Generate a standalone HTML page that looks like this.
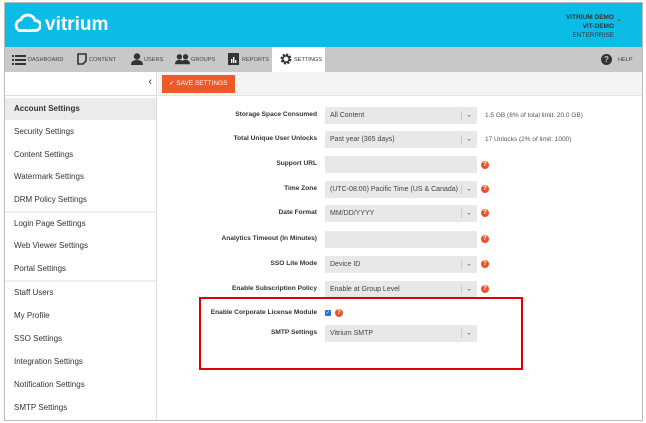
<!DOCTYPE html>
<html><head><style>
*{box-sizing:border-box;margin:0;padding:0}
body{width:646px;height:423px;background:#fff;font-family:"Liberation Sans",sans-serif;position:relative;overflow:hidden}
.frame{position:absolute;left:4px;top:2px;width:639px;height:419px;border:1px solid #bbb;background:#fff}
.hdr{position:absolute;left:5px;top:3px;width:637px;height:44px;background:#0bbde6}
.logo{position:absolute;top:11px;color:#fff;font-size:19px;font-weight:bold}
.acct{position:absolute;right:28px;top:10px;text-align:right;font-size:6.5px;line-height:9px;color:#333;font-weight:bold}
.nav{position:absolute;left:5px;top:47px;width:637px;height:25px;background:#c8c8c8;font-size:5.6px;color:#444}
.nav span{position:absolute;top:9.5px}
.tab{position:absolute;left:267px;top:0;width:53px;height:25px;background:#fff}
.side{position:absolute;left:5px;top:72px;width:152px;height:348px;border-right:1px solid #ddd;background:#fff}
.side .top{height:24px;border-bottom:1px solid #ddd;position:relative}
.item{position:absolute;left:0;width:151px;height:22px;font-size:8px;color:#333;padding-left:9px;line-height:22px}
.toolbar{position:absolute;left:158px;top:72px;width:484px;height:24px;background:#f4f4f4;border-bottom:1px solid #e4e4e4}
.save{position:absolute;left:162px;top:75px;width:73px;height:18px;background:#ec5a2a;color:#fff;font-size:6.5px;line-height:18px;padding-left:7px}
.lbl{position:absolute;right:329px;font-size:6.6px;font-weight:bold;color:#333;text-align:right}
.inp{position:absolute;left:325px;width:152px;height:17px;background:#e8e8e8;font-size:7px;color:#444;padding-left:5px;line-height:17px}
.inp.s:after{content:"";position:absolute;right:15px;top:4px;height:9px;border-left:1px solid #ccc}
.inp.s:before{content:"";position:absolute;right:6px;top:8px;border:2.5px solid transparent;border-top:2.5px solid #999}
.q{position:absolute;left:481px;width:8px;height:8px;border-radius:50%;background:#e8552a;color:#fff;font-size:6px;font-weight:bold;text-align:center;line-height:8px}
.note{position:absolute;left:485px;font-size:6.5px;color:#555}
.red{position:absolute;left:199px;top:297px;width:324px;height:73px;border:2px solid #e00000}
</style></head><body>
<div class="frame"></div>
<div class="hdr">
<svg style="position:absolute;left:9px;top:10px" width="27" height="20" viewBox="0 0 32 24"><path d="M6 21 A7 7 0 0 1 8 8 A9 9 0 0 1 25 9 A6 6 0 0 1 26 21 Z" fill="none" stroke="#fff" stroke-width="3.5"/><path d="M13 14 L20 14 L16 21 Z" fill="#0bbde6"/></svg>
<div class="logo" style="left:40px">vitrium</div>
<div class="acct">VITRIUM DEMO<br>VIT-DEMO<br><span style="font-weight:normal">ENTERPRISE</span></div>
<div style="position:absolute;right:20px;top:12px;font-size:7px;color:#333">⌄</div>
</div>
<div class="nav">
<div class="tab"></div>
<svg style="position:absolute;left:7px;top:7px" width="14" height="11"><rect x="0" y="1" width="2" height="2" fill="#333"/><rect x="3" y="1" width="11" height="2" fill="#333"/><rect x="0" y="5" width="2" height="2" fill="#333"/><rect x="3" y="5" width="11" height="2" fill="#333"/><rect x="0" y="9" width="2" height="2" fill="#333"/><rect x="3" y="9" width="11" height="2" fill="#333"/></svg>
<span style="left:23px">DASHBOARD</span>
<svg style="position:absolute;left:72px;top:6px" width="10" height="12"><path d="M1 1H9V8L6 11H1Z" fill="none" stroke="#333" stroke-width="1.6"/></svg>
<span style="left:84px">CONTENT</span>
<svg style="position:absolute;left:126px;top:6px" width="12" height="12"><circle cx="6" cy="3.5" r="3.2" fill="#333"/><path d="M0 12 Q0 7 6 7 Q12 7 12 12Z" fill="#333"/></svg>
<span style="left:139px">USERS</span>
<svg style="position:absolute;left:170px;top:6px" width="15" height="12" viewBox="0 0 17 12"><circle cx="5" cy="3.5" r="3" fill="#333"/><circle cx="12" cy="3.5" r="3" fill="#333"/><path d="M0 12Q0 7 5 7Q10 7 10 12Z M7 12Q7 7 12 7Q17 7 17 12Z" fill="#333"/></svg>
<span style="left:186px">GROUPS</span>
<svg style="position:absolute;left:223px;top:6px" width="11" height="12"><rect width="11" height="12" fill="#333"/><rect x="3" y="6" width="1.4" height="4" fill="#fff"/><rect x="5" y="4" width="1.4" height="6" fill="#fff"/><rect x="7" y="7" width="1.4" height="3" fill="#fff"/></svg>
<span style="left:237px">REPORTS</span>
<svg style="position:absolute;left:275px;top:6px" width="12" height="12" viewBox="0 0 12 12"><circle cx="6" cy="6" r="4.2" fill="none" stroke="#333" stroke-width="2.6" stroke-dasharray="2 1.3"/><circle cx="6" cy="6" r="3.2" fill="none" stroke="#333" stroke-width="1.6"/></svg>
<span style="left:289px;color:#333">SETTINGS</span>
<div style="position:absolute;left:596px;top:7px;width:11px;height:11px;border-radius:50%;background:#333;color:#c8c8c8;font-size:8px;font-weight:bold;text-align:center;line-height:11px">?</div>
<span style="left:613px">HELP</span>
</div>
<div class="side"><div class="top"><span style="position:absolute;right:4px;top:4px;font-size:11px;color:#333">‹</span></div>
<div class="item" style="top:26px;background:#ebebeb;font-weight:bold">Account Settings</div>
<div class="item" style="top:49px">Security Settings</div>
<div class="item" style="top:72px">Content Settings</div>
<div class="item" style="top:94px">Watermark Settings</div>
<div class="item" style="top:117px">DRM Policy Settings</div>
<div style="position:absolute;left:0;top:139px;width:151px;height:2px;background:#eee"></div>
<div class="item" style="top:141px">Login Page Settings</div>
<div class="item" style="top:163px">Web Viewer Settings</div>
<div class="item" style="top:186px">Portal Settings</div>
<div style="position:absolute;left:0;top:208px;width:151px;height:2px;background:#eee"></div>
<div class="item" style="top:210px">Staff Users</div>
<div class="item" style="top:233px">My Profile</div>
<div class="item" style="top:256px">SSO Settings</div>
<div class="item" style="top:279px">Integration Settings</div>
<div class="item" style="top:302px">Notification Settings</div>
<div class="item" style="top:325px">SMTP Settings</div>
</div>
<div class="toolbar"></div>
<div class="save">✓ SAVE SETTINGS</div>

<div class="lbl" style="top:111px">Storage Space Consumed</div><div class="inp s" style="top:107px">All Content</div><div class="note" style="top:112px">1.5 GB (8% of total limit: 20.0 GB)</div>
<div class="lbl" style="top:135px">Total Unique User Unlocks</div><div class="inp s" style="top:131px">Past year (365 days)</div><div class="note" style="top:136px">17 Unlocks (2% of limit: 1000)</div>
<div class="lbl" style="top:160px">Support URL</div><div class="inp" style="top:156px"></div><div class="q" style="top:161px">?</div>
<div class="lbl" style="top:185px">Time Zone</div><div class="inp s" style="top:181px">(UTC-08:00) Pacific Time (US &amp; Canada)</div><div class="q" style="top:185px">?</div>
<div class="lbl" style="top:209px">Date Format</div><div class="inp s" style="top:205px">MM/DD/YYYY</div><div class="q" style="top:209px">?</div>
<div class="lbl" style="top:235px">Analytics Timeout (In Minutes)</div><div class="inp" style="top:231px"></div><div class="q" style="top:235px">?</div>
<div class="lbl" style="top:260px">SSO Lite Mode</div><div class="inp s" style="top:256px">Device ID</div><div class="q" style="top:260px">?</div>
<div class="lbl" style="top:285px">Enable Subscription Policy</div><div class="inp s" style="top:281px">Enable at Group Level</div><div class="q" style="top:285px">?</div>
<div class="lbl" style="top:309px">Enable Corporate License Module</div>
<div style="position:absolute;left:325px;top:310px;width:6px;height:6px;background:#2a6fd6;border-radius:1px;color:#fff;font-size:5px;line-height:6px;text-align:center">✓</div>
<div class="q" style="left:335px;top:309px">?</div>
<div class="lbl" style="top:329px">SMTP Settings</div><div class="inp s" style="top:325px">Vitrium SMTP</div>
<div class="red"></div>
</body></html>
